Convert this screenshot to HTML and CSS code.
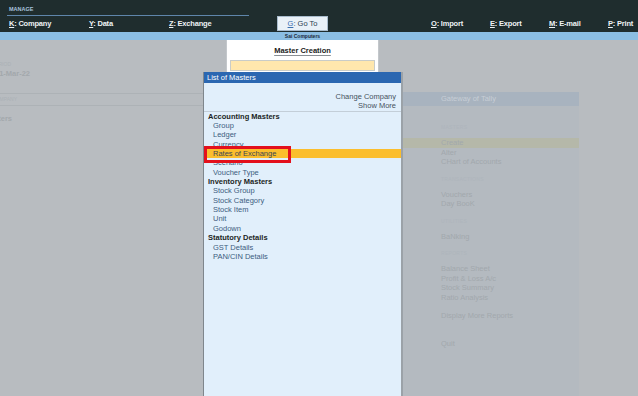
FILE: index.html
```html
<!DOCTYPE html>
<html>
  <head>
    <title>Master Creation</title>
    <meta charset="utf-8" />
    <link rel="stylesheet" href="styles.css">
  </head>
  <body>
    <div class="topbar">
      <div class="manage">
        <div class="manage-title">MANAGE</div>
        <div class="menu-row">
          <span class="menu-item"><u>K</u>: Company</span>
          <span class="menu-item"><u>Y</u>: Data</span>
          <span class="menu-item"><u>Z</u>: Exchange</span>
        </div>
      </div>
      <div class="goto"><u>G</u>: Go To</div>
      <div class="actions">
        <span class="action"><u>O</u>: Import</span>
        <span class="action"><u>E</u>: Export</span>
        <span class="action"><u>M</u>: E-mail</span>
        <span class="action"><u>P</u>: Print</span>
      </div>
    </div>
    <div class="strip"><span class="company">Sai Computers</span></div>

    <div class="main">
      <!-- dimmed background screen -->
      <div class="info">
        <div class="info-label period-label">CURRENT PERIOD</div>
        <div class="info-value period-value">1-Apr-21 to 31-Mar-22</div>
        <div class="info-line"></div>
        <div class="info-label company-label">NAME OF COMPANY</div>
        <div class="info-line second"></div>
        <div class="info-value company-name">Sai Computers</div>
      </div>
      <div class="spacer"></div>
      <div class="gateway">
        <div class="gw-header">Gateway of Tally</div>
        <div class="gw-label first">MASTERS</div>
        <div class="gw-group">
          <div class="gw-item current">Create</div>
          <div class="gw-item">Alter</div>
          <div class="gw-item">CHart of Accounts</div>
        </div>
        <div class="gw-label">TRANSACTIONS</div>
        <div class="gw-group">
          <div class="gw-item">Vouchers</div>
          <div class="gw-item">Day BooK</div>
        </div>
        <div class="gw-label">UTILITIES</div>
        <div class="gw-group">
          <div class="gw-item">BaNking</div>
        </div>
        <div class="gw-label">REPORTS</div>
        <div class="gw-group">
          <div class="gw-item">Balance Sheet</div>
          <div class="gw-item">Profit &amp; Loss A/c</div>
          <div class="gw-item">Stock Summary</div>
          <div class="gw-item">Ratio Analysis</div>
        </div>
        <div class="gw-group more">
          <div class="gw-item">Display More Reports</div>
        </div>
        <div class="gw-group quit">
          <div class="gw-item">Quit</div>
        </div>
      </div>

      <!-- overlays -->
      <div class="master-box">
        <div class="master-title">Master Creation</div>
        <div class="master-input"></div>
      </div>

      <div class="masters">
        <div class="masters-header">List of Masters</div>
        <div class="masters-body">
          <div class="masters-links">
            <div>Change Company</div>
            <div>Show More</div>
          </div>
          <div class="grp">Accounting Masters</div>
          <div class="item">Group</div>
          <div class="item">Ledger</div>
          <div class="item">Currency</div>
          <div class="item selected">Rates of Exchange</div>
          <div class="item">Scenario</div>
          <div class="item">Voucher Type</div>
          <div class="grp">Inventory Masters</div>
          <div class="item">Stock Group</div>
          <div class="item">Stock Category</div>
          <div class="item">Stock Item</div>
          <div class="item">Unit</div>
          <div class="item">Godown</div>
          <div class="grp">Statutory Details</div>
          <div class="item">GST Details</div>
          <div class="item">PAN/CIN Details</div>
        </div>
      </div>
    </div>
  </body>
</html>
```

FILE: styles.css
```css
body {
  margin: 0;
  padding: 0;
  width: 638px;
  height: 396px;
  overflow: hidden;
  background: #b8bcc0;
  font-family: "Liberation Sans", Arial, sans-serif;
  font-size: 7.5px;
}
u {
  text-decoration: underline;
  text-underline-offset: 1px;
}

/* Top menu bar */
.topbar {
  height: 32px;
  background: #1f2d2e;
  display: flex;
  align-items: flex-end;
  color: #eef2f4;
  font-weight: bold;
}
.manage {
  margin-left: 7px;
  width: 242px;
  padding-bottom: 3px;
}
.manage-title {
  font-size: 5.5px;
  line-height: 7px;
  color: #a9c3dd;
  padding: 0 0 2px 2px;
  border-bottom: 1px solid #5f86ab;
}
.menu-row {
  display: flex;
  margin-top: 3px;
  padding-left: 2px;
  height: 10px;
  line-height: 10px;
}
.menu-item {
  width: 81px;
  letter-spacing: -0.2px;
}
.goto {
  margin-left: 28px;
  margin-bottom: 1px;
  width: 49px;
  height: 13px;
  line-height: 13px;
  background: #e9f1f8;
  border: 1px solid #a9bccd;
  color: #2c3e50;
  font-weight: normal;
  text-align: center;
}
.goto u {
  color: #3a6fb0;
}
.actions {
  display: flex;
  margin-left: 103px;
  padding-bottom: 3px;
  height: 10px;
  line-height: 10px;
}
.action {
  width: 59px;
  letter-spacing: -0.2px;
}
.action:last-child {
  width: auto;
}

.strip {
  height: 8px;
  line-height: 8px;
  background: #8bbee3;
  font-size: 5px;
  font-weight: bold;
  color: #1b2b3b;
}
.company {
  display: inline-block;
  margin-left: 267px;
  width: 71px;
  text-align: center;
}

/* Dimmed screen behind the popup */
.main {
  position: relative;
  height: 356px;
  display: grid;
  grid-template-columns: 203px 199px 177px 1fr;
  overflow: hidden;
}
.info {
  padding-top: 21px;
}
.info-label,
.info-value {
  display: flex;
  justify-content: flex-end;
  white-space: nowrap;
}
.info-label {
  font-size: 5px;
  line-height: 6px;
  color: #abb1b6;
}
.info-value {
  font-size: 7.5px;
  line-height: 9px;
  font-weight: bold;
  color: #a3a8ac;
}
.period-label {
  width: 11px;
}
.period-value {
  width: 30px;
  margin-top: 2px;
}
.info-line {
  margin-top: 15px;
  border-top: 1px solid #adb2b6;
}
.company-label {
  width: 17px;
  margin-top: 2px;
}
.info-line.second {
  margin-top: 3px;
}
.company-name {
  width: 12px;
  margin-top: 8px;
}

.gateway {
  margin-top: 52px;
  background: #b4bac0;
  color: #a2a8ad;
}
.gw-header {
  height: 14px;
  line-height: 14px;
  padding-left: 39px;
  background: #a8b3bf;
  color: #c7ced6;
}
.gw-label {
  margin-top: 9px;
  padding-left: 39px;
  font-size: 5px;
  line-height: 7px;
  color: #aeb5bc;
  letter-spacing: 0.3px;
}
.gw-label.first {
  margin-top: 18px;
}
.gw-group {
  margin-top: 7px;
}
.gw-group.more {
  margin-top: 9px;
}
.gw-group.quit {
  margin-top: 18px;
}
.gw-item {
  padding-left: 39px;
  line-height: 9.5px;
  height: 9.5px;
}
.gw-item.current {
  background: #b5b8a9;
}

/* Master Creation box */
.master-box {
  position: absolute;
  left: 226px;
  top: 0;
  width: 151px;
  height: 40px;
  background: #ffffff;
  border-left: 1px solid #c3c7cb;
  border-right: 1px solid #c3c7cb;
}
.master-title {
  padding-top: 6px;
  line-height: 9px;
  text-align: center;
  font-weight: bold;
  color: #222222;
  text-decoration: underline;
  text-decoration-color: #8a8f94;
  text-underline-offset: 2px;
}
.master-input {
  margin: 5px 3px 0;
  height: 9px;
  background: #ffe7ad;
  border: 1px solid #c9ccc8;
}

/* List of Masters popup */
.masters {
  position: absolute;
  left: 203px;
  top: 32px;
  bottom: 0;
  width: 200px;
  box-sizing: border-box;
  display: flex;
  flex-direction: column;
  border-left: 1px solid #7f868c;
  border-right: 2px solid #9ba2a8;
}
.masters-header {
  height: 11px;
  line-height: 11px;
  padding-left: 3px;
  background: #2b67b1;
  color: #ffffff;
}
.masters-body {
  flex: 1;
  background: #e1effb;
}
.masters-links {
  padding: 9px 5px 0 0;
  text-align: right;
  line-height: 9.35px;
  color: #46525e;
  border-bottom: 1px solid #c3ced8;
}
.grp,
.item {
  height: 9.35px;
  line-height: 9.35px;
  white-space: nowrap;
}
.grp {
  padding-left: 4px;
  font-weight: bold;
  color: #1b1f24;
}
.item {
  padding-left: 9px;
  color: #3d5d7f;
}
.item.selected {
  position: relative;
  background: #fbbe2d;
  color: #3a4654;
}
.item.selected::after {
  content: "";
  position: absolute;
  left: 0;
  top: -3.5px;
  width: 87px;
  height: 17px;
  box-sizing: border-box;
  border: 3px solid #e3101c;
}
```
